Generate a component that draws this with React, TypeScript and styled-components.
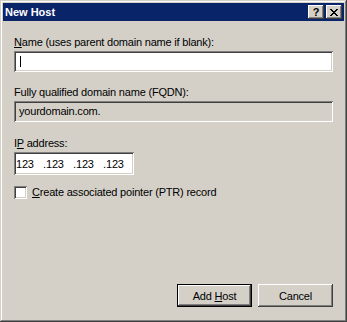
import styled, { createGlobalStyle } from "styled-components";

const GlobalStyle = createGlobalStyle`
  html, body {
    margin: 0;
    padding: 0;
    background: #d4d0c8;
    overflow: hidden;
  }
  body {
    font-family: "Liberation Sans", Arial, sans-serif;
    font-size: 11px;
    color: #000;
  }
`;

const raised = `
  box-shadow: inset -1px -1px #404040, inset 1px 1px #ffffff,
    inset -2px -2px #808080, inset 2px 2px #d4d0c8;
`;

const sunken = `
  box-shadow: inset 1px 1px #808080, inset -1px -1px #ffffff,
    inset 2px 2px #404040, inset -2px -2px #d4d0c8;
`;

const NewHost = () => {
  return (
    <>
      <GlobalStyle />
      <Window>
        <TitleBar>
          <Title>New Host</Title>
          <Caption>
            <CaptionButton>
              <HelpGlyph>?</HelpGlyph>
            </CaptionButton>
            <CaptionButton>
              <svg width="8" height="7" viewBox="0 0 8 7">
                <path
                  d="M0 0h2v1h1v1h2V1h1V0h2v1H7v1H6v1H5v1h1v1h1v1h1v1H6V6H5V5H3v1H2v1H0V6h1V5h1V4h1V3H2V2H1V1H0z"
                  fill="#000"
                />
              </svg>
            </CaptionButton>
          </Caption>
        </TitleBar>
        <Body>
          <Label>
            <u>N</u>ame (uses parent domain name if blank):
          </Label>
          <Field>
            <Caret />
          </Field>
          <Label $top={14}>Fully qualified domain name (FQDN):</Label>
          <Field $disabled>
            <span>yourdomain.com.</span>
          </Field>
          <Label $top={15}>
            I<u>P</u> address:
          </Label>
          <IpField>
            <Octet>123</Octet>
            <Dot>.</Dot>
            <Octet>123</Octet>
            <Dot>.</Dot>
            <Octet>123</Octet>
            <Dot>.</Dot>
            <Octet>123</Octet>
          </IpField>
          <CheckRow>
            <CheckBox />
            <span>
              <u>C</u>reate associated pointer (PTR) record
            </span>
          </CheckRow>
          <Footer>
            <Button $default>
              <span>
                Add <u>H</u>ost
              </span>
            </Button>
            <Button>
              <span>Cancel</span>
            </Button>
          </Footer>
        </Body>
      </Window>
    </>
  );
};

export default NewHost;

const Window = styled.div`
  box-sizing: border-box;
  width: 347px;
  height: 322px;
  padding: 3px;
  display: flex;
  flex-direction: column;
  background: #d4d0c8;
  box-shadow: inset -1px -1px #404040, inset 1px 1px #d4d0c8,
    inset -2px -2px #808080, inset 2px 2px #ffffff;
`;

const TitleBar = styled.div`
  height: 18px;
  display: flex;
  align-items: center;
  justify-content: space-between;
  padding: 0 2px 0 2px;
  background: #0a246a;
`;

const Title = styled.span`
  color: #fff;
  font-weight: bold;
  font-size: 11px;
  line-height: 18px;
`;

const Caption = styled.div`
  display: flex;
  gap: 2px;
`;

const CaptionButton = styled.div`
  box-sizing: border-box;
  width: 16px;
  height: 14px;
  display: flex;
  align-items: center;
  justify-content: center;
  background: #d4d0c8;
  ${raised}
`;

const HelpGlyph = styled.span`
  font-weight: bold;
  font-size: 11px;
  line-height: 14px;
`;

const Body = styled.div`
  flex: 1;
  display: flex;
  flex-direction: column;
  padding: 15px 11px 12px 11px;
  letter-spacing: -0.2px;
`;

const Label = styled.div<{ $top?: number }>`
  line-height: 13px;
  margin-top: ${({ $top }) => $top ?? 0}px;
  margin-bottom: 2px;
`;

const Field = styled.div<{ $disabled?: boolean }>`
  box-sizing: border-box;
  height: 21px;
  display: flex;
  align-items: center;
  padding: 0 5px;
  line-height: 21px;
  background: ${({ $disabled }) => ($disabled ? "#d4d0c8" : "#ffffff")};
  ${sunken}
`;

const Caret = styled.span`
  width: 1px;
  height: 11px;
  margin-left: 1px;
  background: #000;
`;

const IpField = styled.div`
  box-sizing: border-box;
  width: 120px;
  height: 23px;
  display: flex;
  align-items: center;
  padding-left: 2px;
  background: #fff;
  ${sunken}
`;

const Octet = styled.span`
  width: 27px;
`;

const Dot = styled.span`
  width: 3px;
`;

const CheckRow = styled.div`
  display: flex;
  align-items: center;
  gap: 5px;
  margin-top: 11px;
  line-height: 13px;
`;

const CheckBox = styled.span`
  box-sizing: border-box;
  width: 13px;
  height: 13px;
  background: #fff;
  ${sunken}
`;

const Footer = styled.div`
  margin-top: auto;
  display: flex;
  justify-content: flex-end;
  gap: 6px;
`;

const Button = styled.div<{ $default?: boolean }>`
  box-sizing: border-box;
  width: 75px;
  height: 23px;
  display: flex;
  align-items: center;
  justify-content: center;
  background: #d4d0c8;
  border: ${({ $default }) => ($default ? "1px solid #000" : "none")};
  ${raised}
`;
